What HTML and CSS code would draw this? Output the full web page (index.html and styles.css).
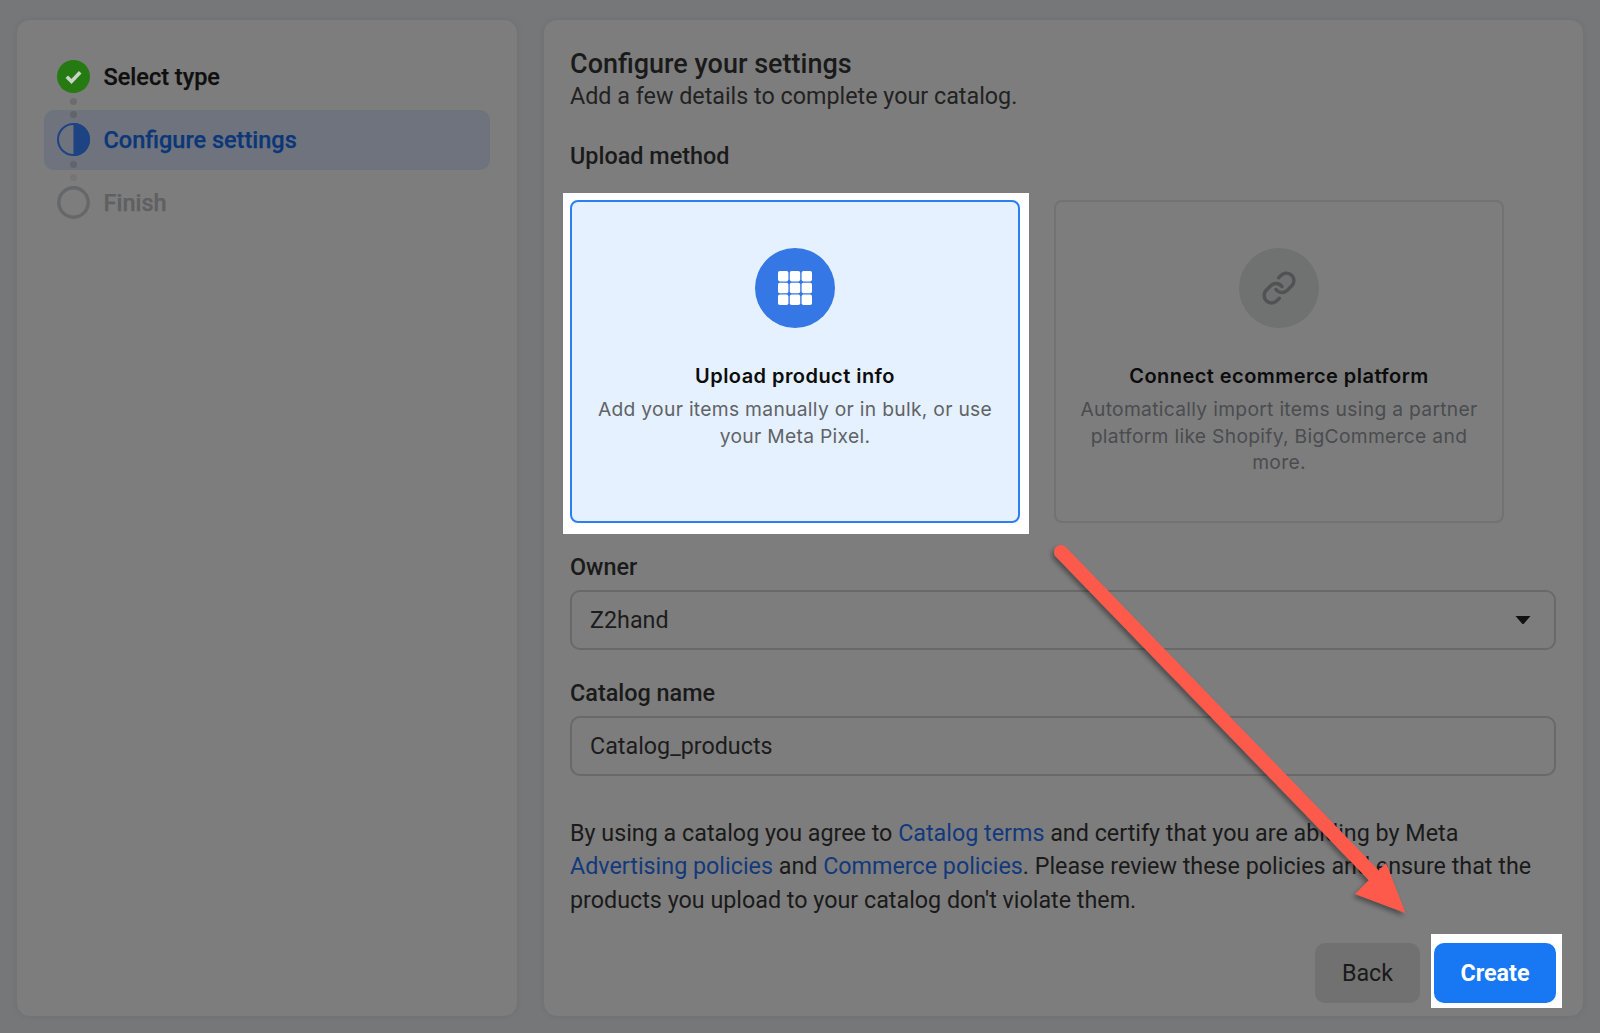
FILE: index.html
```html
<!DOCTYPE html>
<html lang="en">
<head>
<meta charset="utf-8">
<title>Configure your settings</title>
<link rel="stylesheet" href="styles.css">
</head>
<body>
<div class="page">
  <aside class="sidebar">
    <div class="step step-first">
      <svg class="step-icon" viewBox="0 0 33 33"><circle cx="16.5" cy="16.5" r="16.5" fill="#257a12"/><path d="M9.8 16.800l4.700 4.700 8.700-9.200" fill="none" stroke="#c9d4c6" stroke-width="3.6"/></svg>
      <span class="step-label">Select type</span>
    </div>
    <div class="step step-active">
      <svg class="step-icon" viewBox="0 0 33 33"><circle cx="16.5" cy="16.5" r="15.5" fill="none" stroke="#1d4383" stroke-width="2"/><path d="M16.5 0a16.5 16.5 0 0 1 0 33z" fill="#1d4383"/></svg>
      <span class="step-label">Configure settings</span>
    </div>
    <div class="step step-todo">
      <svg class="step-icon" viewBox="0 0 33 33"><circle cx="16.5" cy="16.5" r="14.7" fill="none" stroke="#666768" stroke-width="3.4"/></svg>
      <span class="step-label">Finish</span>
    </div>
  </aside>
  <main class="content">
    <h1 class="title">Configure your settings</h1>
    <p class="subtitle">Add a few details to complete your catalog.</p>
    <h2 class="label label-method">Upload method</h2>
    <div class="cards">
      <div class="highlight highlight-card">
        <div class="card card-selected">
          <div class="card-circle circle-blue">
            <svg class="grid-icon" viewBox="0 0 34 34"><g fill="#fff">
              <rect x="0" y="0" width="10.4" height="10.4" rx="1.8"/><rect x="11.8" y="0" width="10.4" height="10.4" rx="1.8"/><rect x="23.6" y="0" width="10.4" height="10.4" rx="1.8"/>
              <rect x="0" y="11.8" width="10.4" height="10.4" rx="1.8"/><rect x="11.8" y="11.8" width="10.4" height="10.4" rx="1.8"/><rect x="23.6" y="11.8" width="10.4" height="10.4" rx="1.8"/>
              <rect x="0" y="23.6" width="10.4" height="10.4" rx="1.8"/><rect x="11.8" y="23.6" width="10.4" height="10.4" rx="1.8"/><rect x="23.6" y="23.6" width="10.4" height="10.4" rx="1.8"/>
            </g></svg>
          </div>
          <h3 class="card-title">Upload product info</h3>
          <p class="card-text">Add your items manually or in bulk, or use your Meta Pixel.</p>
        </div>
      </div>
      <div class="card">
        <div class="card-circle circle-grey">
          <svg class="link-icon" viewBox="0 0 24 24" fill="none" stroke="#505254" stroke-width="2.3" stroke-linecap="round"><path d="M10 13a5 5 0 0 0 7.54.54l3-3a5 5 0 0 0-7.07-7.07l-1.72 1.71"/><path d="M14 11a5 5 0 0 0-7.54-.54l-3 3a5 5 0 0 0 7.07 7.07l1.71-1.71"/></svg>
        </div>
        <h3 class="card-title">Connect ecommerce platform</h3>
        <p class="card-text">Automatically import items using a partner platform like Shopify, BigCommerce and more.</p>
      </div>
    </div>
    <h2 class="label label-owner">Owner</h2>
    <div class="field">
      <span>Z2hand</span>
      <svg class="caret" viewBox="0 0 16 10"><path d="M0.5 1h15l-6.5 7.6q-1 1-2 0z" fill="#111"/></svg>
    </div>
    <h2 class="label label-name">Catalog name</h2>
    <div class="field"><span>Catalog_products</span></div>
    <p class="terms">By using a catalog you agree to <a class="link">Catalog terms</a> and certify that you are abiding by Meta <a class="link">Advertising policies</a> and <a class="link">Commerce policies</a>. Please review these policies and ensure that the products you upload to your catalog don't violate them.</p>
    <div class="actions">
      <button class="btn btn-back">Back</button>
      <div class="highlight highlight-btn"><button class="btn btn-create">Create</button></div>
    </div>
  </main>
  <svg class="arrow" viewBox="0 0 1600 1033">
    <defs><filter id="arrow-shadow" x="-10%" y="-10%" width="120%" height="120%"><feDropShadow dx="-2" dy="3" stdDeviation="2.5" flood-color="#000" flood-opacity=".4"/></filter></defs>
    <g filter="url(#arrow-shadow)" fill="#fe5a4c">
      <path d="M1061 552L1388 890" stroke="#fe5a4c" stroke-width="14" stroke-linecap="round" fill="none"/>
      <path d="M1405.500 913L1355 894L1386 863z"/>
    </g>
  </svg>
</div>
</body>
</html>
```

FILE: styles.css
```css
* { box-sizing: border-box; }
html, body { margin: 0; height: 100%; }
body {
  background: #767779;
  font-family: Roboto, "Liberation Sans", sans-serif;
  color: #1a1a1a;
  overflow: hidden;
}
.page {
  position: relative;
  width: 1600px;
  height: 1033px;
  display: flex;
  gap: 27px;
  padding: 20px 17px 17px 17px;
}
.sidebar {
  width: 500px;
  background: #7d7d7d;
  border-radius: 13px;
  padding: 26.500px 27px 0;
  display: flex;
  flex-direction: column;
  gap: 3px;
  box-shadow: 0 0 6px rgba(0,0,0,.08);
}
.step {
  position: relative;
  height: 60px;
  display: flex;
  align-items: center;
  gap: 13.500px;
  padding-left: 13px;
  border-radius: 10px;
}
.step-icon { width: 33px; height: 33px; flex: none; }
.step-label { font-size: 23.500px; font-weight: 500; -webkit-text-stroke: .25px currentColor; }
.step-first .step-label { color: #0f0f0f; }
.step-active { background: #6f737e; }
.step-active .step-label { color: #0b3779; }
.step-todo .step-label { color: #5f6061; }
.step-first::after, .step-active::before, .step-active::after, .step-todo::before {
  content: "";
  position: absolute;
  left: 26px;
  width: 7px;
  height: 7px;
  border-radius: 50%;
  background: #6b6c6e;
}
.step-first::after { bottom: 1.500px; }
.step-active::before { top: 1.500px; background: #62646c; }
.step-active::after { bottom: 1.500px; background: #62646c; }
.step-todo::before { top: 1.500px; background: #757576; }
.content {
  flex: 1;
  background: #7d7d7d;
  border-radius: 13px;
  padding: 28px 27px 13px 26px;
  display: flex;
  flex-direction: column;
  box-shadow: 0 0 6px rgba(0,0,0,.08);
}
.title { margin: 0; font-size: 27px; line-height: 33px; font-weight: 500; color: #1a1a1a; }
.subtitle { margin: -1px 0 0; font-size: 23.300px; line-height: 32px; color: #222; }
.label { margin: 0; font-size: 23.400px; line-height: 30px; font-weight: 500; color: #1a1a1a; }
.label-method { margin-top: 29px; }
.label-owner { margin-top: 28.500px; }
.label-name { margin-top: 28.500px; }
.cards { display: flex; gap: 34px; margin-top: 29px; }
.highlight { background: #fff; flex: none; }
.highlight-card { padding: 7px 9px 11px 7px; margin: -7px -9px -11px -7px; }
.highlight-btn { padding: 9px 6px 5px 3px; margin: -9px -6px -5px -3px; }
.card {
  width: 450px;
  height: 323px;
  border: 2px solid #727272;
  border-radius: 8px;
  padding: 46px 20px 0;
  display: flex;
  flex-direction: column;
  align-items: center;
  text-align: center;
  font-family: Inter, "Liberation Sans", sans-serif;
}
.card-selected { background: #e5f1fe; border-color: #2a80f0; }
.card-circle {
  width: 80px;
  height: 80px;
  border-radius: 50%;
  flex: none;
  display: flex;
  align-items: center;
  justify-content: center;
}
.circle-blue { background: #3577e5; }
.circle-grey { background: #707272; }
.grid-icon { width: 34px; height: 34px; }
.link-icon { width: 36px; height: 36px; }
.card-title { margin: 34px 0 0; font-size: 20px; line-height: 28px; font-weight: 600; color: #0c0c0c; letter-spacing: .45px; }
.card-text { margin: 6px 0 0; font-size: 19.250px; line-height: 26.600px; font-weight: 400; color: #4a4c4f; letter-spacing: .3px; }
.card-selected .card-text { color: #5f6368; }
.field {
  margin-top: 8px;
  height: 60px;
  border: 2px solid #696969;
  border-radius: 10px;
  padding: 0 23px 0 18px;
  display: flex;
  align-items: center;
  justify-content: space-between;
  font-size: 23.300px;
  color: #1c1c1c;
}
.caret { width: 16px; height: 10px; }
.terms { margin: 41px 0 0; font-size: 23.300px; line-height: 33.400px; color: #1a1a1a; }
.link { color: #12397c; }
.actions { margin-top: auto; display: flex; justify-content: flex-end; gap: 14px; }
.btn {
  height: 60px;
  border: 0;
  border-radius: 10px;
  font-family: Roboto, "Liberation Sans", sans-serif;
  font-size: 23.300px;
}
.btn-back { width: 105px; background: #717171; color: #1a1a1a; }
.btn-create {
  display: block;
  width: 122px;
  background: #1877f2;
  color: #fff;
  font-weight: 700;
}
.arrow {
  position: absolute;
  left: 0;
  top: 0;
  width: 1600px;
  height: 1033px;
  pointer-events: none;
}
```
